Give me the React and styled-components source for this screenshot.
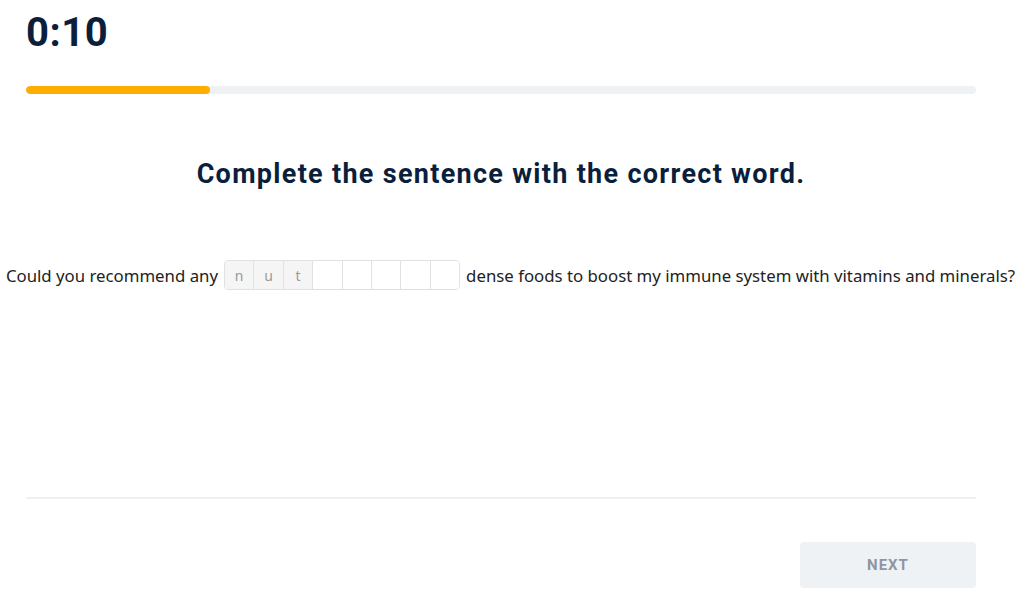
import React from "react";
import styled, { createGlobalStyle } from "styled-components";

const GlobalStyle = createGlobalStyle`
  html, body { margin: 0; padding: 0; background: #fff; }
  body { font-family: "Noto Sans", "Open Sans", sans-serif; }
`;

const Page = styled.div`
  width: 1027px;
  height: 603px;
  position: relative;
  overflow: hidden;
  display: flex;
  flex-direction: column;
`;

const Top = styled.div`
  padding: 10px 51px 0 26px;
`;

const Timer = styled.div`
  font-family: Roboto, "Liberation Sans", sans-serif;
  font-weight: 700;
  font-size: 40px;
  line-height: 46px;
  color: #0b1f3c;
  letter-spacing: 0.5px;
`;

const Track = styled.div`
  margin-top: 30px;
  height: 8px;
  border-radius: 4px;
  background: #eff2f5;
  overflow: hidden;
`;

const Fill = styled.div`
  height: 100%;
  border-radius: 4px;
  background: #ffad00;
`;

const Heading = styled.h1`
  margin: 64px 51px 0 26px;
  text-align: center;
  font-family: Roboto, "Liberation Sans", sans-serif;
  font-weight: 700;
  font-size: 27px;
  line-height: 32px;
  letter-spacing: 1.3px;
  color: #0b1f3c;
`;

const Sentence = styled.div`
  margin-top: 70px;
  display: flex;
  justify-content: center;
  align-items: center;
  gap: 6px;
  font-family: "Noto Sans", "Open Sans", sans-serif;
  font-size: 16.8px;
  color: #222;
  white-space: nowrap;
  position: relative;
  left: -3px;
`;

const Letters = styled.div`
  display: flex;
  height: 28px;
  border: 1px solid #e1e1e1;
  border-radius: 4px;
  overflow: hidden;
`;

const Cell = styled.div`
  width: 28.4px;
  display: flex;
  align-items: center;
  justify-content: center;
  font-size: 14px;
  color: #9a9a9a;
  background: ${(p) => (p.filled ? "#f5f5f5" : "#fff")};
  & + & { border-left: 1px solid #e1e1e1; }
`;

const Spacer = styled.div`
  flex: 1;
`;

const Divider = styled.div`
  margin: 0 51px 0 26px;
  height: 2px;
  background: #eef1f4;
`;

const Footer = styled.div`
  display: flex;
  justify-content: flex-end;
  padding: 43px 51px 15px 26px;
`;

const NextButton = styled.button`
  width: 176px;
  height: 46px;
  border: none;
  border-radius: 4px;
  background: #eff2f5;
  color: #8d96a2;
  font-family: Roboto, "Liberation Sans", sans-serif;
  font-weight: 700;
  font-size: 15px;
  letter-spacing: 1px;
`;

const Watermark = styled.div`
  position: absolute;
  top: ${(p) => p.y}px;
  left: ${(p) => p.x}px;
  transform: rotate(-30deg);
  font-family: "Liberation Sans", sans-serif;
  font-weight: 700;
  font-size: 30px;
  color: rgba(0, 0, 0, 0.025);
  pointer-events: none;
  white-space: nowrap;
`;

const word = ["n", "u", "t", "", "", "", "", ""];
const marks = [
  [230, 242],
  [398, 242],
  [563, 242],
  [730, 242],
  [880, 242],
];

export default function App() {
  return (
    <>
      <GlobalStyle />
      <Page>
        <Top>
          <Timer>0:10</Timer>
          <Track>
            <Fill style={{ width: `${(184 / 950) * 100}%` }} />
          </Track>
        </Top>
        <Heading>Complete the sentence with the correct word.</Heading>
        <Sentence>
          <span>Could you recommend any</span>
          <Letters>
            {word.map((l, i) => (
              <Cell key={i} filled={i < 3}>
                {l}
              </Cell>
            ))}
          </Letters>
          <span>dense foods to boost my immune system with vitamins and minerals?</span>
        </Sentence>
        <Spacer />
        <Divider />
        <Footer>
          <NextButton>NEXT</NextButton>
        </Footer>
        {marks.map(([x, y], i) => (
          <Watermark key={i} x={x} y={y}>
            DET Pro
          </Watermark>
        ))}
      </Page>
    </>
  );
}
